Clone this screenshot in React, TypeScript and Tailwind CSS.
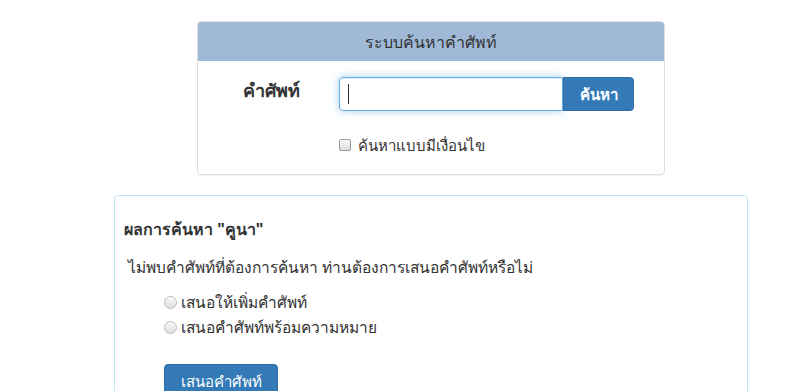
export default function App() {
	return (
		<div
			className="min-h-[391px] w-[800px] overflow-hidden bg-white text-[#333]"
			style={{ fontFamily: '"Noto Sans", "Liberation Sans", Tahoma, sans-serif' }}
		>
			<div className="ml-[114px] w-[634px] pt-[21px]">
				<div className="ml-[83px] w-[468px] overflow-hidden rounded-[4px] border border-[#ddd] shadow-[0_1px_1px_rgba(0,0,0,0.05)]">
					<div className="flex h-[39px] items-center justify-center bg-[#9fb9d7] text-[16px]">
						ระบบค้นหาคำศัพท์
					</div>
					<div className="pb-[17px] pt-[16px]">
						<div className="flex items-start">
							<label className="w-[141px] pl-[45px] text-[18px] font-bold">
								คำศัพท์
							</label>
							<div className="flex h-[34px] w-[295px]">
								<div className="flex h-[34px] w-[224px] items-center rounded-l-[4px] border border-[#66afe9] pl-[8px] shadow-[inset_0_1px_1px_rgba(0,0,0,0.075),0_0_8px_rgba(102,175,233,0.6)]">
									<span className="h-[20px] w-px bg-[#333]" />
								</div>
								<button className="flex h-[34px] w-[71px] items-center justify-center rounded-r-[4px] border border-[#2e6da4] bg-[#337ab7] text-[15px] font-bold text-white">
									ค้นหา
								</button>
							</div>
						</div>
						<div className="ml-[141px] mt-[23px] flex items-center gap-[7px] text-[15px]">
							<span className="h-[12px] w-[12px] rounded-[2px] border border-[#999] bg-gradient-to-b from-[#fafafa] to-[#ddd]" />
							ค้นหาแบบมีเงื่อนไข
						</div>
					</div>
				</div>

				<div className="mt-[20px] h-[200px] rounded-[4px] border border-[#bce8f1] px-[9px] pt-[21px]">
					<h3 className="text-[16px] font-bold">ผลการค้นหา "คูนา"</h3>
					<p className="ml-[4px] mt-[15px] text-[15.5px]">
						ไม่พบคำศัพท์ที่ต้องการค้นหา ท่านต้องการเสนอคำศัพท์หรือไม่
					</p>
					<div className="ml-[40px] mt-[12px] flex flex-col gap-[2px] text-[15.5px]">
						{["เสนอให้เพิ่มคำศัพท์", "เสนอคำศัพท์พร้อมความหมาย"].map((t) => (
							<div key={t} className="flex items-center gap-[4px]">
								<span className="h-[13px] w-[13px] rounded-full border border-[#bbb] bg-gradient-to-b from-[#fafafa] to-[#ddd]" />
								{t}
							</div>
						))}
					</div>
					<button className="ml-[40px] mt-[25px] flex h-[34px] w-[114px] items-center justify-center rounded-[4px] border border-[#2e6da4] bg-[#337ab7] text-[15px] text-white">
						เสนอคำศัพท์
					</button>
				</div>
			</div>
		</div>
	);
}
